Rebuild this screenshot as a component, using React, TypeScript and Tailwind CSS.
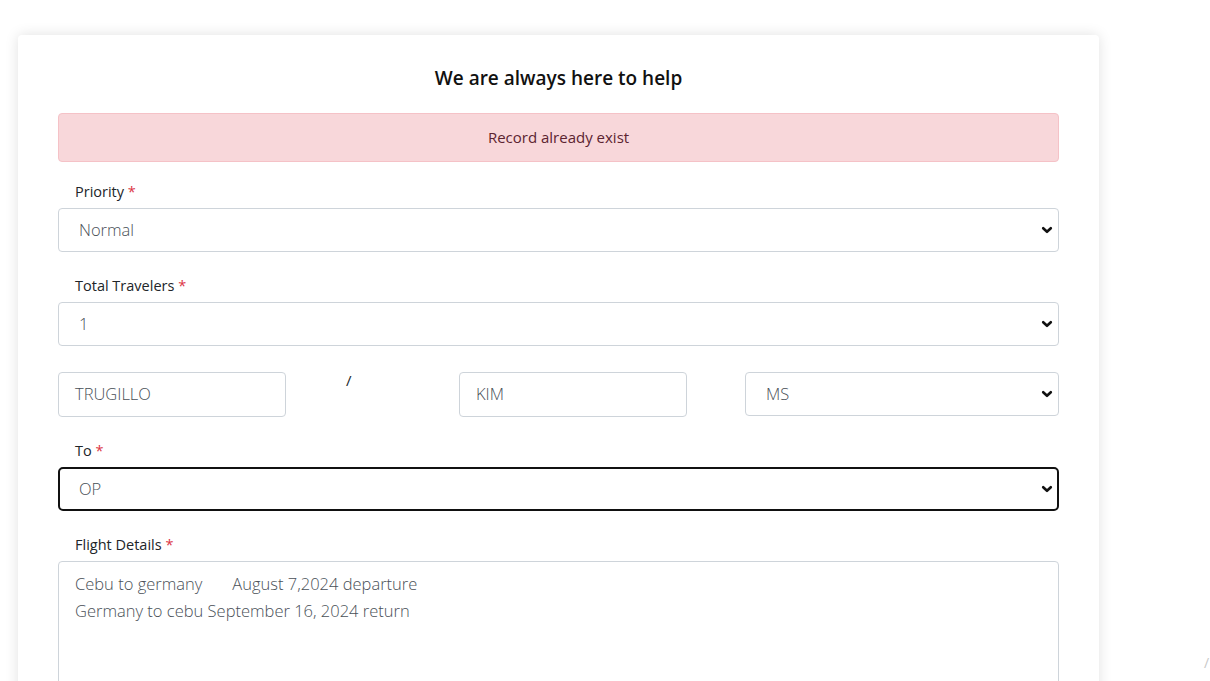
import React from "react";

const Chevron = () => (
  <svg width="12" height="12" viewBox="0 0 12 12" className="shrink-0">
    <polyline points="2.2,4.2 6,7.8 9.8,4.2" fill="none" stroke="#111" strokeWidth="2.6" strokeLinecap="round" strokeLinejoin="round" />
  </svg>
);

const Label = ({ text }: { text: string }) => (
  <div className="pl-[17px] pt-[1px] text-[14.5px] leading-[22px] text-[#212529]">
    {text} <span className="text-[#dc3545]">*</span>
  </div>
);

const Select = ({ value, focused = false, className = "" }: { value: string; focused?: boolean; className?: string }) => (
  <div
    className={
      "flex h-[44px] items-center justify-between bg-white " +
      (focused ? "rounded-[5px] border-2 border-[#111] pl-[19px] pr-[4px] " : "rounded-[4px] border border-[#ced4da] pl-[20px] pr-[5px] ") +
      className
    }
  >
    <span className="text-[16.5px] font-light text-[#495057]">{value}</span>
    <Chevron />
  </div>
);

const Input = ({ value }: { value: string }) => (
  <div className="flex h-[45px] w-[228px] shrink-0 items-center rounded-[4px] border border-[#ced4da] bg-white pl-[16px]">
    <span className="text-[16.5px] font-light text-[#495057]">{value}</span>
  </div>
);

export default function App() {
  return (
    <div className="relative min-h-[681px] overflow-hidden bg-white" style={{ fontFamily: '"Open Sans", "Noto Sans", sans-serif' }}>
      <div className="ml-[18px] mt-[35px] w-[1081px] rounded-[4px] bg-white px-[40px] pt-[29px] pb-[40px] shadow-[0_0_14px_rgba(0,0,0,0.12)]">
        <h1 className="text-center text-[19px] font-semibold leading-[28px] text-[#111]">We are always here to help</h1>
        <div className="mt-[21px] flex h-[49px] items-center justify-center rounded-[4px] border border-[#f5c2c7] bg-[#f8d7da] text-[15px] text-[#5c2430]">
          Record already exist
        </div>

        <div className="mt-[18px]">
          <Label text="Priority" />
          <Select value="Normal" className="mt-[5px]" />
        </div>

        <div className="mt-[22px]">
          <Label text="Total Travelers" />
          <Select value="1" className="mt-[5px]" />
        </div>

        <div className="mt-[26px] flex items-start">
          <Input value="TRUGILLO" />
          <div className="-mt-[2px] w-[173px] shrink-0 pl-[60px] text-[15px] leading-[20px] text-[#212529]">/</div>
          <Input value="KIM" />
          <div className="w-[58px] shrink-0" />
          <Select value="MS" className="flex-1" />
        </div>

        <div className="mt-[22px]">
          <Label text="To" />
          <Select value="OP" focused className="mt-[5px]" />
        </div>

        <div className="mt-[22px]">
          <Label text="Flight Details" />
          <div className="mt-[5px] h-[160px] rounded-[4px] border border-[#ced4da] bg-white px-[16px] pt-[8px] text-[16.5px] font-light leading-[27px] text-[#495057]">
            <div className="whitespace-pre">Cebu to germany       August 7,2024 departure</div>
            <div>Germany to cebu September 16, 2024 return</div>
          </div>
        </div>
      </div>
      <div className="absolute left-[1204px] top-[652px] text-[14px] text-[#c8c8c8]">/</div>
    </div>
  );
}
